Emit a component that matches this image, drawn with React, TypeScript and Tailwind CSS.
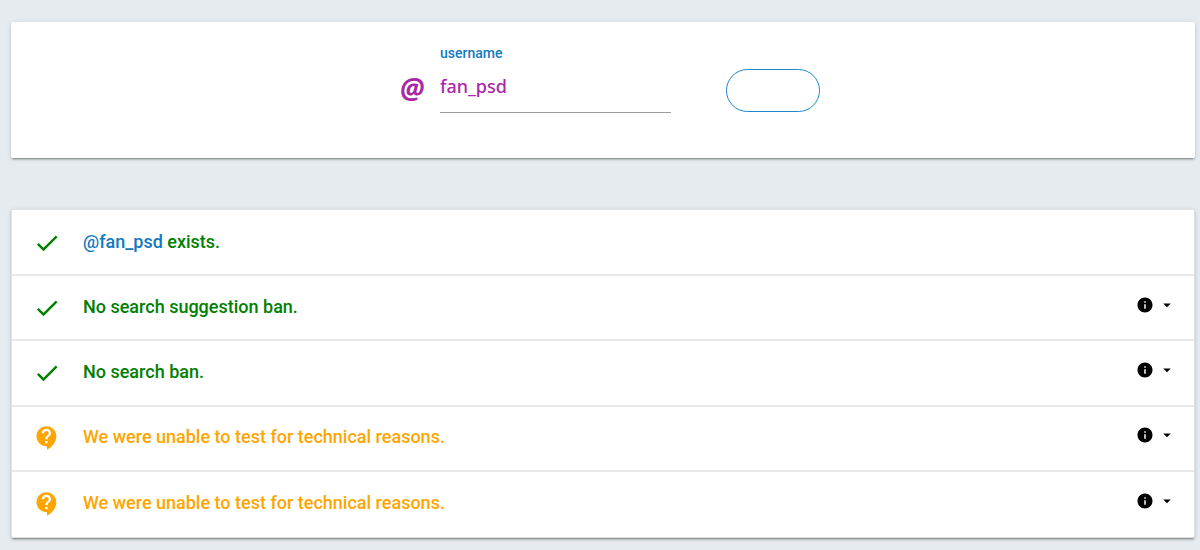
import { useState } from 'react';
import { MdArrowDropDown, MdCheck, MdContactSupport, MdInfo } from 'react-icons/md';

type Result = {
  id: string;
  status: 'passed' | 'unknown';
  text: string;
  handle?: string;
  details: boolean;
};

const results: Result[] = [
  { id: 'exists', status: 'passed', handle: '@fan_psd', text: 'exists.', details: false },
  { id: 'suggestion', status: 'passed', text: 'No search suggestion ban.', details: true },
  { id: 'search', status: 'passed', text: 'No search ban.', details: true },
  { id: 'ghost', status: 'unknown', text: 'We were unable to test for technical reasons.', details: true },
  { id: 'reply', status: 'unknown', text: 'We were unable to test for technical reasons.', details: true },
];

function ResultRow({ result }: { result: Result }) {
  const passed = result.status === 'passed';
  return (
    <li className="flex items-center border-b-2 border-[#e8e8e8] pr-[18px] pl-[21px] last:border-b-0">
      {passed ? (
        <MdCheck aria-hidden="true" className="size-7 shrink-0 text-[#008000]" />
      ) : (
        <MdContactSupport aria-hidden="true" className="size-7 shrink-0 text-[#ffa500]" />
      )}
      <p className={passed ? 'ml-[22px] grow pb-0.5 text-lg font-medium text-[#008000]' : 'ml-[22px] grow pb-0.5 text-lg font-medium text-[#ffa500]'}>
        {result.handle && (
          <>
            <a href="#profile" className="text-[#1279bf]">{result.handle}</a>{' '}
          </>
        )}
        {result.text}
      </p>
      {result.details && (
        <button type="button" aria-label="Show details" className="flex items-center gap-1 pb-1.5 text-black">
          <MdInfo className="size-[18px]" />
          <MdArrowDropDown className="size-[18px]" />
        </button>
      )}
    </li>
  );
}

export default function App() {
  const [username, setUsername] = useState('fan_psd');
  return (
    <main className="min-h-screen bg-[#e5ebef] pt-[22px] pr-[5px] pb-3 pl-[11px] font-['Roboto',sans-serif]">
      <form
        onSubmit={(event) => event.preventDefault()}
        className="flex min-h-[136px] items-start justify-center rounded-xs bg-white pt-[22px] pl-[14px] shadow-[0_2px_2px_0_rgba(0,0,0,0.14),0_3px_1px_-2px_rgba(0,0,0,0.2),0_1px_5px_0_rgba(0,0,0,0.12)]"
      >
        <span aria-hidden="true" className="mt-6 w-10 font-['Open_Sans',sans-serif] text-[28px] leading-10 font-bold text-[#aa28a7] italic">
          @
        </span>
        <div className="w-[231px]">
          <label htmlFor="username" className="block text-sm leading-[18px] font-medium text-[#1279bf]">
            username
          </label>
          <input
            id="username"
            value={username}
            onChange={(event) => setUsername(event.target.value)}
            className="block h-[51px] w-full border-b border-[#9e9e9e] pb-0.5 font-['Noto_Sans',sans-serif] text-lg font-medium text-[#aa28a7] outline-none"
          />
        </div>
        <button type="submit" aria-label="Test" className="mt-[25px] ml-[55px] h-[43px] w-[94px] rounded-full border border-[#1e88c9]" />
      </form>

      <ul className="mt-[51px] grid min-h-[329px] auto-rows-fr rounded-xs border border-[#e0e0e0] bg-white pt-px shadow-[0_2px_2px_0_rgba(0,0,0,0.14),0_3px_1px_-2px_rgba(0,0,0,0.2),0_1px_5px_0_rgba(0,0,0,0.12)]">
        {results.map((result) => (
          <ResultRow key={result.id} result={result} />
        ))}
      </ul>
    </main>
  );
}
